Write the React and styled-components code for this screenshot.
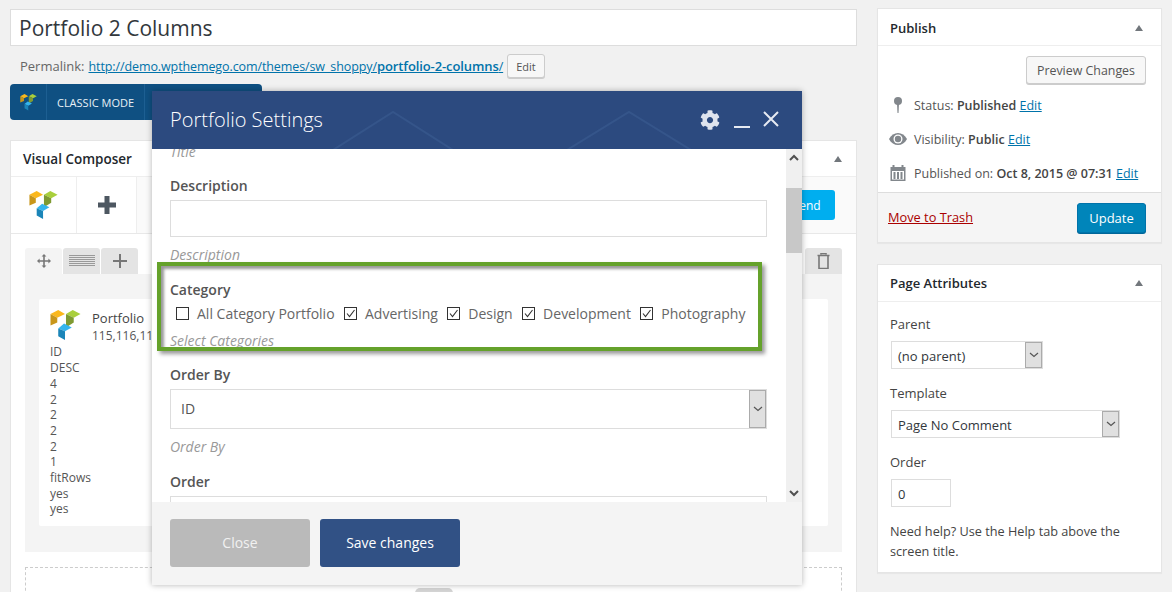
import React from 'react';
import styled, { createGlobalStyle } from 'styled-components';
import { FaCog } from 'react-icons/fa';

const GlobalStyle = createGlobalStyle`
    html, body {
        margin: 0;
        padding: 0;
        background: #f1f1f1;
    }
    * {
        box-sizing: border-box;
    }
`;

const VcLogo = ({ size }) => (
    <svg width={size} height={size} viewBox="0 0 31 32">
        <polygon points="0,4 8,0 15,4 7,8" fill="#fbb81c" />
        <polygon points="0,4 7,8 7,13 0,16" fill="#c8961a" />
        <polygon points="16,4 23,0 31,4 24,8" fill="#a9cf3c" />
        <polygon points="16,4 24,8 24,13 16,18" fill="#7f9a32" />
        <polygon points="8,19 14,14 22,18 15,22" fill="#35b5ee" />
        <polygon points="8,19 15,22 15,31 8,27" fill="#1b85b8" />
    </svg>
);

const Chevron = () => (
    <svg width="10" height="6" viewBox="0 0 10 6">
        <path d="M1 1l4 3.5L9 1" fill="none" stroke="#555" strokeWidth="1.2" />
    </svg>
);

const Check = () => (
    <svg width="11" height="11" viewBox="0 0 11 11">
        <path d="M2 5.5l2.5 3L9.5 2" fill="none" stroke="#333" strokeWidth="1.1" />
    </svg>
);

const categories = [
    { name: 'All Category Portfolio', on: false },
    { name: 'Advertising', on: true },
    { name: 'Design', on: true },
    { name: 'Development', on: true },
    { name: 'Photography', on: true },
];

const shortcodeValues = ['ID', 'DESC', '4', '2', '2', '2', '2', '1', 'fitRows', 'yes', 'yes'];

const App = () => {
    return (
        <PAGE>
            <GlobalStyle />
            <MAIN>
                <TITLEINPUT>Portfolio 2 Columns</TITLEINPUT>
                <PERMALINK>
                    <span>Permalink:</span>
                    <SLUG>
                        http://demo.wpthemego.com/themes/sw_shoppy/<strong>portfolio-2-columns</strong>/
                    </SLUG>
                    <SMALLBUTTON>Edit</SMALLBUTTON>
                </PERMALINK>
                <MODEBAR>
                    <MODELOGO><VcLogo size={17} /></MODELOGO>
                    <MODEBUTTON>CLASSIC MODE</MODEBUTTON>
                </MODEBAR>
                <PANEL>
                    <PANELHEAD>
                        Visual Composer
                        <TRIANGLE />
                    </PANELHEAD>
                    <VCTOOLS>
                        <TOOLCELL $w={66}><VcLogo size={29} /></TOOLCELL>
                        <TOOLCELL $w={60}>
                            <svg width="18" height="18" viewBox="0 0 18 18">
                                <path d="M6.500 0h5v6.500H18v5h-6.500V18h-5v-6.500H0v-5h6.500z" fill="#4d5761" />
                            </svg>
                        </TOOLCELL>
                        <FRONTEND>Frontend</FRONTEND>
                    </VCTOOLS>
                    <EDITOR>
                        <ROWTABS>
                            <ROWTAB $active>
                                <svg width="14" height="14" viewBox="0 0 14 14">
                                    <path d="M7 0l2.400 2.600H7.800v3.600h3.600V4.600L14 7l-2.600 2.400V7.800H7.800v3.600h1.600L7 14l-2.400-2.600h1.600V7.800H2.600v1.600L0 7l2.600-2.400v1.600h3.600V2.600H4.600z" fill="#777" />
                                </svg>
                            </ROWTAB>
                            <ROWTAB>
                                <svg width="26" height="12" viewBox="0 0 26 12">
                                    <path d="M0 .5h26M0 2.500h26M0 4.500h26M0 6.500h26M0 8.500h26M0 10.500h26" stroke="#999" strokeWidth="1" />
                                </svg>
                            </ROWTAB>
                            <ROWTAB>
                                <svg width="14" height="14" viewBox="0 0 14 14">
                                    <path d="M6 0h2v6h6v2H8v6H6V8H0V6h6z" fill="#777" />
                                </svg>
                            </ROWTAB>
                            <TRASHTAB>
                                <svg width="13" height="16" viewBox="0 0 13 16">
                                    <path d="M4 1.500V.5h5v1M.5 2.500h12M2 2.500h9v13H2z" fill="none" stroke="#777" strokeWidth="1.600" />
                                </svg>
                            </TRASHTAB>
                        </ROWTABS>
                        <ROWBODY>
                            <CARD>
                                <CARDHEAD>
                                    <VcLogo size={31} />
                                    <div>
                                        <CARDNAME>Portfolio</CARDNAME>
                                        <CARDIDS>115,116,117,118</CARDIDS>
                                    </div>
                                </CARDHEAD>
                                {shortcodeValues.map((v, i) => (
                                    <CARDLINE key={i}>{v}</CARDLINE>
                                ))}
                            </CARD>
                        </ROWBODY>
                        <DASHED><GREYPILL /></DASHED>
                    </EDITOR>
                </PANEL>
            </MAIN>

            <SIDE>
                <BOX>
                    <BOXHEAD $drop>
                        Publish
                        <TRIANGLE />
                    </BOXHEAD>
                    <PUBLISHBODY>
                        <PREVIEWROW>
                            <SMALLBUTTON $big>Preview Changes</SMALLBUTTON>
                        </PREVIEWROW>
                        <MISC>
                            <svg width="18" height="18" viewBox="0 0 18 18">
                                <circle cx="9" cy="5" r="4" fill="#82878c" />
                                <path d="M8 8h2l-.5 9h-1z" fill="#82878c" />
                            </svg>
                            <span>Status: <b>Published</b> <EDITLINK>Edit</EDITLINK></span>
                        </MISC>
                        <MISC>
                            <svg width="18" height="14" viewBox="0 0 18 14">
                                <path d="M0 7c2-4 5.500-6 9-6s7 2 9 6c-2 4-5.500 6-9 6s-7-2-9-6z" fill="#82878c" />
                                <circle cx="9" cy="7" r="4.500" fill="#fff" />
                                <circle cx="9" cy="7" r="3.200" fill="#82878c" />
                            </svg>
                            <span>Visibility: <b>Public</b> <EDITLINK>Edit</EDITLINK></span>
                        </MISC>
                        <MISC>
                            <svg width="17" height="18" viewBox="0 0 17 18">
                                <path d="M1 3h15v14H1z" fill="#82878c" />
                                <rect x="2.500" y="7" width="12" height="8.500" fill="#fff" />
                                <path d="M5 8v7M8.500 8v7M12 8v7" stroke="#82878c" strokeWidth="2" />
                                <path d="M4 1v3M13 1v3" stroke="#82878c" strokeWidth="2" />
                            </svg>
                            <span>Published on: <b>Oct 8, 2015 @ 07:31</b> <EDITLINK>Edit</EDITLINK></span>
                        </MISC>
                    </PUBLISHBODY>
                    <PUBLISHFOOT>
                        <TRASHLINK>Move to Trash</TRASHLINK>
                        <UPDATE>Update</UPDATE>
                    </PUBLISHFOOT>
                </BOX>
                <BOX>
                    <BOXHEAD>
                        Page Attributes
                        <TRIANGLE />
                    </BOXHEAD>
                    <ATTRBODY>
                        <ATTRLABEL>Parent</ATTRLABEL>
                        <SIDESELECT $w={152}>
                            (no parent)
                            <SELECTARROW><Chevron /></SELECTARROW>
                        </SIDESELECT>
                        <ATTRLABEL>Template</ATTRLABEL>
                        <SIDESELECT $w={229}>
                            Page No Comment
                            <SELECTARROW><Chevron /></SELECTARROW>
                        </SIDESELECT>
                        <ATTRLABEL>Order</ATTRLABEL>
                        <SIDESELECT $w={60}>0</SIDESELECT>
                        <HELP>Need help? Use the Help tab above the screen title.</HELP>
                    </ATTRBODY>
                </BOX>
            </SIDE>

            <MODAL>
                <MODALHEAD>
                    <HEADLINES width="650" height="58" viewBox="0 0 650 58">
                        <path d="M181 59l60-38 60 38M415 59l62-38 62 38" fill="none" stroke="#35558a" strokeWidth="2" />
                    </HEADLINES>
                    <MODALTITLE>Portfolio Settings</MODALTITLE>
                    <HEADICONS>
                        <GEAR><FaCog size={20} color="#dfe4ee" /></GEAR>
                        <MINIMIZE />
                        <svg width="16" height="16" viewBox="0 0 16 16">
                            <path d="M1 1l14 14M15 1L1 15" stroke="#e6eaf2" strokeWidth="2" />
                        </svg>
                    </HEADICONS>
                </MODALHEAD>
                <MODALMIDDLE>
                    <SCROLLAREA>
                        <FIELDS>
                            <HINT>Title</HINT>
                            <FIELD>
                                <FIELDLABEL>Description</FIELDLABEL>
                                <TEXTBOX />
                                <HINT>Description</HINT>
                            </FIELD>
                            <FIELD $gap={15}>
                                <FIELDLABEL>Category</FIELDLABEL>
                                <CHECKROW>
                                    {categories.map((c) => (
                                        <CHECKITEM key={c.name}>
                                            <CHECKBOX>{c.on && <Check />}</CHECKBOX>
                                            {c.name}
                                        </CHECKITEM>
                                    ))}
                                </CHECKROW>
                                <HINT>Select Categories</HINT>
                            </FIELD>
                            <FIELD>
                                <FIELDLABEL>Order By</FIELDLABEL>
                                <MODALSELECT>
                                    ID
                                    <SELECTARROW><Chevron /></SELECTARROW>
                                </MODALSELECT>
                                <HINT>Order By</HINT>
                            </FIELD>
                            <FIELD $gap={15}>
                                <FIELDLABEL>Order</FIELDLABEL>
                                <MODALSELECT />
                            </FIELD>
                        </FIELDS>
                        <HIGHLIGHT />
                    </SCROLLAREA>
                    <SCROLLBAR>
                        <SCROLLBTN>
                            <svg width="10" height="7" viewBox="0 0 10 7">
                                <path d="M1 6l4-4 4 4" fill="none" stroke="#505050" strokeWidth="2" />
                            </svg>
                        </SCROLLBTN>
                        <SCROLLTHUMB />
                        <SCROLLBTN>
                            <svg width="10" height="7" viewBox="0 0 10 7">
                                <path d="M1 1l4 4 4-4" fill="none" stroke="#505050" strokeWidth="2" />
                            </svg>
                        </SCROLLBTN>
                    </SCROLLBAR>
                </MODALMIDDLE>
                <MODALFOOT>
                    <FOOTBUTTON>Close</FOOTBUTTON>
                    <FOOTBUTTON $primary>Save changes</FOOTBUTTON>
                </MODALFOOT>
            </MODAL>
        </PAGE>
    );
};

const PAGE = styled.div`
    position: relative;
    width: 1172px;
    height: 592px;
    overflow: hidden;
    background: #f1f1f1;
    padding: 9px 10px 0;
    display: flex;
    gap: 20px;
    font-family: "Open Sans", sans-serif;
    font-size: 13px;
    color: #444;
`;

const MAIN = styled.div`
    width: 847px;
    flex: none;
`;

const TITLEINPUT = styled.div`
    height: 37px;
    background: #fff;
    border: 1px solid #ddd;
    padding: 1px 8px 0;
    font-size: 21px;
    line-height: 35px;
    color: #32373c;
`;

const PERMALINK = styled.div`
    margin-top: 8px;
    height: 24px;
    padding-left: 10px;
    display: flex;
    align-items: center;
    gap: 4px;
    font-size: 13px;
    color: #666;
`;

const SLUG = styled.a`
    font-size: 12.5px;
    letter-spacing: -0.1px;
    color: #0073aa;
    text-decoration: underline;
    strong {
        font-size: 13px;
        font-weight: 600;
    }
`;

const SMALLBUTTON = styled.div`
    height: ${(p) => (p.$big ? '28px' : '24px')};
    padding: 0 ${(p) => (p.$big ? '10px' : '8px')};
    display: inline-flex;
    align-items: center;
    font-size: ${(p) => (p.$big ? '12.4px' : '11px')};
    background: #f7f7f7;
    border: 1px solid #ccc;
    border-radius: 3px;
    box-shadow: 0 1px 0 #ccc;
    color: #555;
`;

const MODEBAR = styled.div`
    margin-top: 6px;
    width: 252px;
    height: 36px;
    display: flex;
    background: #0f5082;
    border-radius: 4px;
`;

const MODELOGO = styled.div`
    width: 37px;
    display: flex;
    align-items: center;
    justify-content: center;
    border-right: 1px solid #1d5f92;
`;

const MODEBUTTON = styled.div`
    width: 98px;
    display: flex;
    align-items: center;
    justify-content: center;
    border-right: 1px solid #1d5f92;
    font-size: 11px;
    color: #e8f0f6;
`;

const PANEL = styled.div`
    margin-top: 20px;
    height: 460px;
    background: #fff;
    border: 1px solid #e5e5e5;
`;

const PANELHEAD = styled.div`
    height: 36px;
    padding: 0 12px;
    display: flex;
    align-items: center;
    justify-content: space-between;
    border-bottom: 1px solid #eee;
    font-size: 13.5px;
    font-weight: 600;
    color: #23282d;
`;

const TRIANGLE = styled.span`
    width: 0;
    height: 0;
    margin-right: 2px;
    border-left: 4.5px solid transparent;
    border-right: 4.5px solid transparent;
    border-bottom: 6px solid #72777c;
`;

const VCTOOLS = styled.div`
    height: 57px;
    display: flex;
    align-items: center;
    background: #fafafa;
    border-bottom: 1px solid #e8e8e8;
`;

const TOOLCELL = styled.div`
    width: ${(p) => p.$w}px;
    height: 100%;
    display: flex;
    align-items: center;
    justify-content: center;
    background: #fff;
    border-right: 1px solid #eee;
`;

const FRONTEND = styled.div`
    margin-left: auto;
    margin-right: 21px;
    width: 80px;
    height: 30px;
    display: flex;
    align-items: center;
    justify-content: center;
    background: #00aeef;
    border-radius: 3px;
    font-size: 12px;
    color: #fff;
`;

const EDITOR = styled.div`
    padding: 14px 14px 0;
`;

const ROWTABS = styled.div`
    display: flex;
    gap: 1px;
    height: 26px;
`;

const ROWTAB = styled.div`
    width: 37px;
    display: flex;
    align-items: center;
    justify-content: center;
    background: ${(p) => (p.$active ? '#f4f4f4' : '#e4e4e4')};
    border-radius: 3px 3px 0 0;
`;

const TRASHTAB = styled(ROWTAB)`
    margin-left: auto;
`;

const ROWBODY = styled.div`
    height: 278px;
    padding: 25px 14px 0;
    background: #f4f4f4;
`;

const CARD = styled.div`
    height: 227px;
    padding: 11px 11px 0;
    background: #fff;
    border-radius: 2px;
`;

const CARDHEAD = styled.div`
    display: flex;
    gap: 11px;
    height: 34.4px;
`;

const CARDNAME = styled.div`
    font-size: 13px;
    line-height: 16px;
    color: #444;
`;

const CARDIDS = styled.div`
    margin-top: 2px;
    font-size: 12px;
    line-height: 16px;
    color: #555;
`;

const CARDLINE = styled.div`
    font-size: 12px;
    line-height: 15.7px;
    color: #555;
`;

const DASHED = styled.div`
    position: relative;
    margin-top: 15px;
    height: 60px;
    border: 1px dashed #ccc;
`;

const GREYPILL = styled.div`
    position: absolute;
    left: 389px;
    top: 20px;
    width: 38px;
    height: 20px;
    background: #d4d4d4;
    border-radius: 5px;
`;

const SIDE = styled.div`
    width: 285px;
    flex: none;
    margin-top: -1px;
    display: flex;
    flex-direction: column;
    gap: 21px;
`;

const BOX = styled.div`
    background: #fff;
    border: 1px solid #e5e5e5;
    box-shadow: 0 1px 1px rgba(0, 0, 0, 0.04);
`;

const BOXHEAD = styled(PANELHEAD)`
    height: 37px;
    padding-top: ${(p) => (p.$drop ? '1px' : '0')};
    padding-right: 16px;
    font-size: 13px;
`;

const PUBLISHBODY = styled.div`
    height: 146px;
    padding: 10px 15px 0 11px;
`;

const PREVIEWROW = styled.div`
    display: flex;
    justify-content: flex-end;
    margin-bottom: 4px;
`;

const MISC = styled.div`
    height: 34px;
    display: flex;
    align-items: center;
    gap: 7px;
    font-size: 12.5px;
    color: #555;
    svg {
        width: 18px;
        flex: none;
    }
    b {
        font-weight: 600;
        color: #444;
    }
`;

const EDITLINK = styled.a`
    color: #0073aa;
    text-decoration: underline;
`;

const PUBLISHFOOT = styled.div`
    height: 50px;
    padding: 0 15px 0 10px;
    display: flex;
    align-items: center;
    justify-content: space-between;
    background: #f5f5f5;
    border-top: 1px solid #ddd;
`;

const TRASHLINK = styled.a`
    margin-bottom: 2px;
    font-size: 12.8px;
    color: #a00;
    text-decoration: underline;
`;

const UPDATE = styled.div`
    width: 69px;
    height: 30px;
    display: flex;
    align-items: center;
    justify-content: center;
    background: #0085ba;
    border: 1px solid #0073aa;
    border-radius: 3px;
    box-shadow: 0 1px 0 #006799;
    font-size: 13px;
    color: #fff;
`;

const ATTRBODY = styled.div`
    padding: 12px 12px 11px;
`;

const ATTRLABEL = styled.div`
    font-size: 13px;
    line-height: 20px;
    margin-bottom: 7px;
    color: #444;
`;

const SIDESELECT = styled.div`
    position: relative;
    width: ${(p) => p.$w}px;
    height: 28px;
    margin: 0 0 14px 1px;
    padding: 2px 0 0 6px;
    display: flex;
    align-items: center;
    background: #fff;
    border: 1px solid #ddd;
    font-size: 13px;
    color: #32373c;
`;

const SELECTARROW = styled.span`
    position: absolute;
    top: 0;
    right: 0;
    bottom: 0;
    width: 17px;
    display: flex;
    align-items: center;
    justify-content: center;
    background: #e0e0e0;
    border: 1px solid #ababab;
`;

const HELP = styled.div`
    font-size: 12.7px;
    line-height: 20px;
    color: #444;
    margin-top: 14px;
`;

const MODAL = styled.div`
    position: absolute;
    left: 152px;
    top: 91px;
    width: 650px;
    height: 494px;
    display: flex;
    flex-direction: column;
    background: #fff;
    box-shadow: 0 0 6px rgba(0, 0, 0, 0.3);
`;

const MODALHEAD = styled.div`
    position: relative;
    height: 58px;
    flex: none;
    padding: 0 23px 2px 18px;
    display: flex;
    align-items: center;
    justify-content: space-between;
    background: #2c4a7f;
`;

const HEADLINES = styled.svg`
    position: absolute;
    left: 0;
    top: 0;
`;

const MODALTITLE = styled.div`
    position: relative;
    font-size: 20px;
    font-weight: 300;
    color: #fff;
`;

const HEADICONS = styled.div`
    position: relative;
    display: flex;
    align-items: center;
    gap: 13px;
`;

const GEAR = styled.span`
    display: flex;
    margin: 2px 1px 0 0;
`;

const MINIMIZE = styled.span`
    width: 16px;
    height: 2px;
    margin-top: 16px;
    background: #e6eaf2;
`;

const MODALMIDDLE = styled.div`
    flex: 1;
    min-height: 0;
    display: flex;
`;

const SCROLLAREA = styled.div`
    position: relative;
    flex: 1;
    overflow: hidden;
`;

const FIELDS = styled.div`
    margin-top: -7px;
    padding: 0 19px 0 18px;
`;

const FIELD = styled.div`
    margin-top: ${(p) => p.$gap || 14}px;
`;

const FIELDLABEL = styled.div`
    font-size: 14px;
    font-weight: 600;
    line-height: 20px;
    margin-bottom: 4px;
    color: #555;
`;

const TEXTBOX = styled.div`
    height: 37px;
    border: 1px solid #ddd;
`;

const HINT = styled.div`
    font-size: 14px;
    font-style: italic;
    line-height: 20px;
    margin-top: 8px;
    color: #999;
    &:first-child {
        margin-top: 0;
    }
`;

const CHECKROW = styled.div`
    height: 20px;
    margin-top: -1px;
    padding-left: 6px;
    display: flex;
    align-items: center;
    gap: 9.4px;
`;

const CHECKITEM = styled.div`
    display: flex;
    align-items: center;
    gap: 8px;
    font-size: 14px;
    color: #666;
`;

const CHECKBOX = styled.span`
    width: 13px;
    height: 13px;
    display: flex;
    align-items: center;
    justify-content: center;
    border: 1px solid #333;
`;

const MODALSELECT = styled.div`
    position: relative;
    height: 40px;
    padding: 0 0 2px 10px;
    display: flex;
    align-items: center;
    border: 1px solid #ddd;
    font-size: 14px;
    color: #555;
`;

const HIGHLIGHT = styled.div`
    position: absolute;
    left: 5px;
    top: 113px;
    width: 605px;
    height: 89px;
    border: 4px solid #65a22b;
    box-shadow: 3px 3px 4px rgba(0, 0, 0, 0.4), inset 3px 3px 3px rgba(0, 0, 0, 0.4);
    pointer-events: none;
`;

const SCROLLBAR = styled.div`
    position: relative;
    width: 16px;
    flex: none;
    display: flex;
    flex-direction: column;
    justify-content: space-between;
    background: #f0f0f0;
`;

const SCROLLBTN = styled.div`
    height: 17px;
    display: flex;
    align-items: center;
    justify-content: center;
`;

const SCROLLTHUMB = styled.div`
    position: absolute;
    top: 39px;
    left: 0;
    width: 100%;
    height: 65px;
    background: #c8c8c8;
`;

const MODALFOOT = styled.div`
    height: 83px;
    flex: none;
    padding: 17px 18px 0;
    display: flex;
    gap: 10px;
    background: #f4f4f4;
`;

const FOOTBUTTON = styled.div`
    width: 140px;
    height: 48px;
    padding-bottom: 2px;
    display: flex;
    align-items: center;
    justify-content: center;
    background: ${(p) => (p.$primary ? '#315185' : '#bababa')};
    border-radius: 3px;
    font-size: 14px;
    color: ${(p) => (p.$primary ? '#fff' : '#f1f1f1')};
`;

export default App;
